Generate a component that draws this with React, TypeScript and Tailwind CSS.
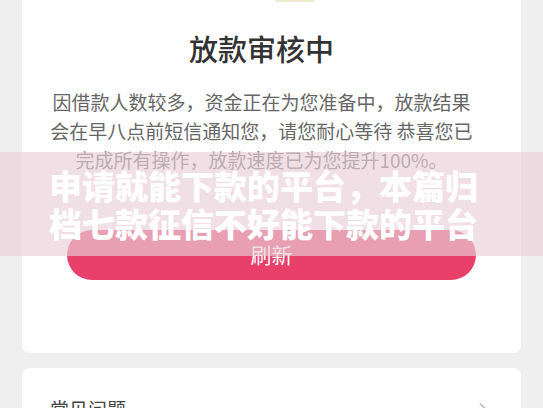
import { ChevronRight } from "lucide-react";

const font = "font-['Noto_Sans_CJK_SC','Noto_Sans',sans-serif]";

export default function App() {
  return (
    <div className={`relative h-[408px] w-[543px] overflow-hidden bg-[#efefef] px-[22px] ${font}`}>
      {/* 主卡片：顶部已滚出视口 */}
      <div className="flex flex-col rounded-b-[8px] bg-white pb-[73px]">
        <div className="ml-[253px] h-[2px] w-[40px] rounded-b-full bg-[#ecebcf]" />
        <div className="flex flex-col items-center pr-[20px]">
          <h1 className="mt-[27px] text-[29px] leading-[38px] font-medium text-[#333333]">
            放款审核中
          </h1>
          <div className="mt-[20px] flex flex-col items-center text-[19px] leading-[29px] text-[#666666]">
            <p>因借款人数较多，资金正在为您准备中，放款结果</p>
            <p>会在早八点前短信通知您，请您耐心等待 恭喜您已</p>
            <p>完成所有操作，放款速度已为您提升100%。</p>
          </div>
        </div>
        <button className="mx-[45px] mt-[56px] flex h-[50px] items-center justify-center rounded-full bg-[#e8406a] text-[21px] text-white">
          刷新
        </button>
      </div>

      {/* 常见问题 */}
      <div className="mt-[15px] flex items-start justify-between rounded-[8px] bg-white px-[28px] pt-[27px] pb-[20px]">
        <span className="text-[19px] leading-[28px] text-[#444444]">常见问题</span>
        <ChevronRight className="mt-[4px] h-[20px] w-[20px] text-[#bbbbbb]" strokeWidth={2} />
      </div>

      {/* 覆盖在页面上的标题条 */}
      <div className="absolute inset-x-0 top-[152px] flex h-[104px] flex-col items-center justify-center bg-[rgba(232,208,216,0.66)] pr-[16px]">
        <p className="text-[33px] leading-[38px] font-black text-white">申请就能下款的平台，本篇归</p>
        <p className="text-[33px] leading-[38px] font-black text-white">档七款征信不好能下款的平台</p>
      </div>
    </div>
  );
}
